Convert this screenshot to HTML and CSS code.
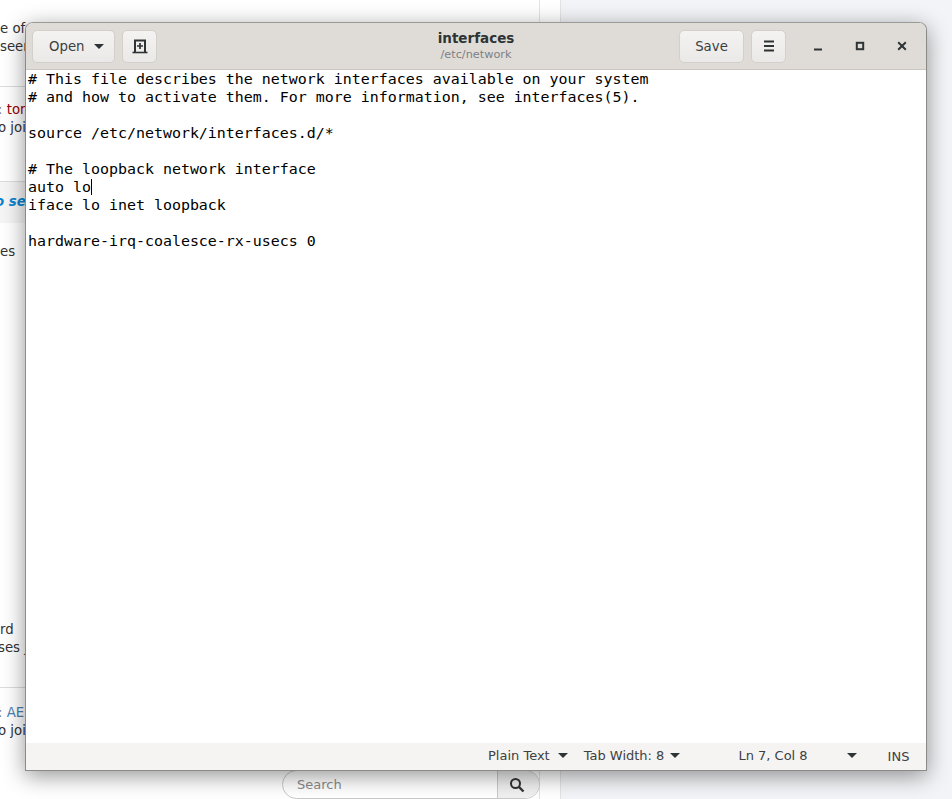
FILE: index.html
```html
<!DOCTYPE html>
<html lang="en">
<head>
<meta charset="utf-8">
<title>interfaces</title>
<link rel="stylesheet" href="styles.css">
</head>
<body>
<div class="desktop">
  <main class="page">
    <div class="feed">
      <section class="post post-a"><p>e of</p><p>seen</p></section>
      <section class="post post-b"><p class="shift"><span class="dim">:</span> <span class="red">tony</span></p><p class="shift">o join</p></section>
      <section class="post post-c"><p class="blue">o see</p></section>
      <section class="post post-d">
        <div><p>es</p></div>
        <div><p>rd</p><p class="shift">ses j</p></div>
      </section>
      <section class="post post-f"><p class="shift"><span class="dim">:</span> <span class="link">AEN</span></p><p class="shift">o join</p></section>
    </div>
    <form class="search">
      <span class="search-input">Search</span>
      <span class="search-btn">
        <svg width="16" height="16" viewBox="0 0 16 16"><circle cx="6.500" cy="6.500" r="4.500" fill="none" stroke="#333" stroke-width="2"/><path d="M10 10l4.500 4.500" stroke="#333" stroke-width="2.400" fill="none"/></svg>
      </span>
    </form>
  </main>
  <aside class="side"></aside>

  <div class="window">
    <header class="titlebar">
      <div class="tb-group">
        <button class="btn btn-open" type="button">Open<span class="caret"></span></button>
        <button class="btn btn-icon" type="button">
          <svg width="16" height="16" viewBox="0 0 16 16"><path d="M3 14V2.500h10V14" fill="none" stroke="#2e3436" stroke-width="2"/><path d="M0.500 14.500h15" stroke="#2e3436" stroke-width="1.600"/><path d="M8 5v6M5 8h6" stroke="#2e3436" stroke-width="1.700"/></svg>
        </button>
      </div>
      <div class="tb-title">
        <div class="title">interfaces</div>
        <div class="subtitle">/etc/network</div>
      </div>
      <div class="tb-group">
        <button class="btn btn-save" type="button">Save</button>
        <button class="btn btn-icon" type="button">
          <svg width="12" height="12" viewBox="0 0 12 12"><path d="M1 1.500h10M1 6h10M1 10.500h10" stroke="#2e3436" stroke-width="2"/></svg>
        </button>
        <div class="wm">
          <svg width="10" height="10" viewBox="0 0 10 10"><path d="M1 8.500h8" stroke="#2e3436" stroke-width="2"/></svg>
          <svg width="10" height="10" viewBox="0 0 10 10"><rect x="1.800" y="1.800" width="6.400" height="6.400" fill="none" stroke="#2e3436" stroke-width="2"/></svg>
          <svg width="10" height="10" viewBox="0 0 10 10"><path d="M1.200 1.200l7.600 7.600M8.800 1.200L1.200 8.800" stroke="#2e3436" stroke-width="2"/></svg>
        </div>
      </div>
    </header>
    <pre class="editor"># This file describes the network interfaces available on your system
# and how to activate them. For more information, see interfaces(5).

source /etc/network/interfaces.d/*

# The loopback network interface
auto lo<span class="cursor"></span>
iface lo inet loopback

hardware-irq-coalesce-rx-usecs 0</pre>
    <footer class="statusbar">
      <span class="st st-lang">Plain Text<span class="caret"></span></span>
      <span class="st st-tab">Tab Width: 8<span class="caret"></span></span>
      <span class="st st-pos">Ln 7, Col 8</span>
      <span class="caret st-extra"></span>
      <span class="st st-ins">INS</span>
    </footer>
  </div>
</div>
</body>
</html>
```
FILE: styles.css
```css
* { box-sizing: border-box; }
html, body { margin: 0; height: 100%; }
body { overflow: hidden; background: #fff; font-family: "DejaVu Sans", sans-serif; }
.desktop { position: relative; width: 952px; height: 799px; display: flex; overflow: hidden; }

.page { width: 561px; height: 799px; background: #fff; border-right: 1px solid #e3e3e3; position: relative; }
.side { flex: 1; background: #f3f4f7; }
.feed { width: 540px; height: 799px; border-right: 1px solid #e3e3e3; font-size: 13.300px; line-height: 18px; color: #333; }
.post { overflow: hidden; border-bottom: 1px solid #dcdcdc; }
.post p { margin: 0; white-space: nowrap; }
.post p.shift { margin-left: -2px; }
.post p.blue { margin-left: -5px; }
.post-a { height: 87px; padding-top: 20px; }
.post-b { height: 95px; padding-top: 14px; }
.post-c { height: 41px; padding-top: 11px; background: #f5f5f5; border-bottom: 0; }
.post-d { height: 465px; padding: 20px 0 30px; display: flex; flex-direction: column; justify-content: space-between; }
.post-f { padding-top: 16px; border-bottom: 0; }
.red { color: #990000; }
.dim { color: #888; }
.link { color: #4a7fb0; }
.blue { color: #0a84d0; font-weight: 700; font-style: italic; }

.search { position: absolute; left: 282px; top: 770px; width: 258px; height: 29px; display: flex; border: 1px solid #c9c9c9; border-radius: 15px; overflow: hidden; background: #fff; }
.search-input { flex: 1; padding-left: 14px; font-size: 13px; line-height: 27px; color: #8a8a8a; }
.search-btn { width: 42px; background: #f0f0f0; border-left: 1px solid #c9c9c9; display: flex; align-items: center; justify-content: center; padding-right: 4px; }

.window { position: absolute; left: 25px; top: 22px; width: 902px; height: 749px; display: flex; flex-direction: column; border: 1px solid #8a8a88; border-top-color: #9a9a98; border-radius: 8px 8px 0 0; background: #fff; box-shadow: 0 5px 22px rgba(0,0,0,.42); }

.titlebar { height: 47px; flex: none; display: flex; justify-content: space-between; align-items: center; padding: 0 6px; background: #dfdcd8; border-bottom: 1px solid #cdc7c2; border-radius: 7px 7px 0 0; position: relative; }
.tb-group { display: flex; align-items: center; gap: 7px; }
.btn { height: 33px; padding: 0; border: 1px solid #d3cfcb; border-radius: 5px; background: linear-gradient(#f4f3f2, #ebe9e7); color: #3a3f41; font: 13.300px "DejaVu Sans", sans-serif; display: flex; align-items: center; justify-content: center; }
.btn-open { width: 83px; gap: 9px; justify-content: flex-start; padding-left: 16px; }
.btn-icon { width: 35px; }
.btn-save { width: 65px; }
.tb-title { position: absolute; left: 0; right: 0; top: 7px; text-align: center; }
.title { font-size: 13.500px; font-weight: 700; line-height: 17px; color: #2e3436; }
.subtitle { font-size: 11.300px; line-height: 13px; color: #7d8082; margin-top: 1px; }
.wm { display: flex; align-items: center; gap: 32px; margin-left: 20px; padding-right: 13px; }

.caret { display: inline-block; width: 0; height: 0; border-left: 5px solid transparent; border-right: 5px solid transparent; border-top: 5px solid #2e3436; }

.editor { flex: 1; margin: 0; padding: 0 2px; font: 14.950px/18px "DejaVu Sans Mono", monospace; color: #000; background: #fff; overflow: hidden; }
.cursor { display: inline-block; width: 1px; height: 16px; background: #000; vertical-align: -3px; }

.statusbar { height: 27px; flex: none; background: #f5f4f2; display: flex; align-items: center; font-size: 13px; color: #3d4143; padding-bottom: 3px; }
.st { white-space: nowrap; display: inline-flex; align-items: center; gap: 6px; }
.st-lang { margin-left: 462px; gap: 8px; }
.st-tab { margin-left: 16px; }
.st-pos { margin-left: 58px; }
.st-extra { margin-left: 39px; }
.st-ins { margin-left: 31px; margin-top: 3px; }
```
